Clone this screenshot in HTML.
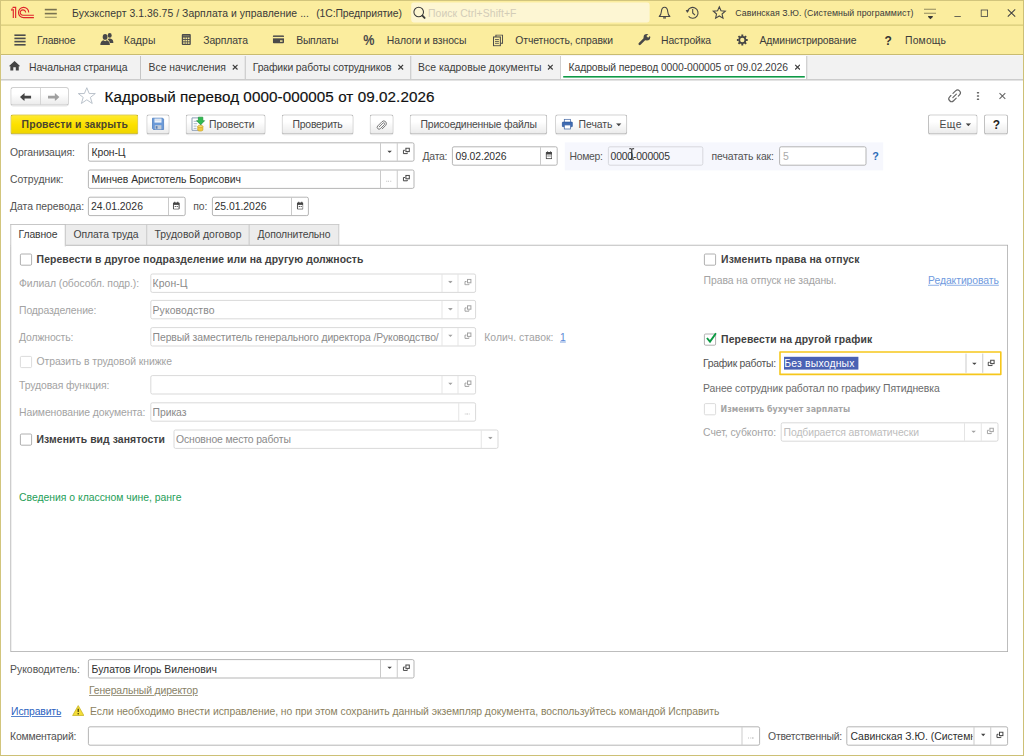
<!DOCTYPE html>
<html lang="ru"><head><meta charset="utf-8"><title>Кадровый перевод 0000-000005 от 09.02.2026</title>
<style>
html,body{margin:0;padding:0;background:#fff;overflow:hidden;width:1024px;height:756px}
#root{position:absolute;left:0;top:0;width:1280px;height:945px;transform:scale(.8);transform-origin:0 0;font-family:"Liberation Sans",Arial,sans-serif;font-size:13px;color:#3c3c3c;overflow:hidden;background:#fff}
#root div,#root svg,#root span.a{position:absolute;box-sizing:border-box}
.t{white-space:nowrap;line-height:20px;height:20px}
.b{font-weight:bold}
.g{color:#9a9a9a}
.y{background:#fbed9e}
.in{background:#fff;border:1px solid #a2a2a2;border-radius:2.5px}
.ind{background:#fff;border:1px solid #cfcfcf;border-radius:2.5px}
.sep{background:#c4c4c4;width:1px}
.sepd{background:#dcdcdc;width:1px}
.btn{border:1px solid #b2b2b2;border-bottom-color:#9f9f9f;border-radius:3px;background:linear-gradient(#fff,#fff 35%,#ebebeb);box-shadow:0 1px 0 rgba(0,0,0,.1)}
.ybtn{border:1px solid #c4ad14;border-bottom-color:#ad9705;border-radius:3px;background:linear-gradient(#ffea30,#fde100 50%,#efd500);box-shadow:0 1px 0 rgba(0,0,0,.13)}
.cb{background:#fff;border:1px solid #9c9c9c;border-radius:2px}
.cbd{background:#fff;border:1px solid #d2d2d2;border-radius:2px}
.lnk{color:#3b6fc4;text-decoration:underline}
#px{position:absolute;left:0;top:0;width:1024px;height:756px;pointer-events:none}
#px i{position:absolute;display:block}

</style></head><body>
<div id="root">
<div class="y" style="left:0px;top:0px;width:1280px;height:69px;"></div>
<div class="" style="left:0px;top:69px;width:1280px;height:31px;background:#f2f2f2"></div>
<svg style="left:10px;top:5px;" width="40" height="22.5" viewBox="8 4 32 18">
<g fill="none" stroke="#e0262c" stroke-width="1.15">
<path d="M28.7 12.6A5.1 5.1 0 1 0 23.6 17.6H33.9"/>
<path d="M25.6 12.6A2.7 2.7 0 1 0 22.9 15.25H33.9"/>
<path d="M11.1 10.1L13.3 9.7V17.9M12.7 7.4H15.65V17.9"/>
<path d="M12.9 7.5L11.3 9.6" stroke-width=".8"/>
</g>
</svg>
<div class="" style="left:56.25px;top:10.75px;width:14.38px;height:1.75px;background:#787250"></div>
<div class="" style="left:56.25px;top:15.75px;width:14.38px;height:1.75px;background:#787250"></div>
<div class="" style="left:56.25px;top:20.5px;width:14.38px;height:1.75px;background:#787250"></div>
<div class="t " style="left:90.06px;top:7.12px;color:#3a3a3a;letter-spacing:0.066px">Бухэксперт 3.1.36.75 / Зарплата и управление ...</div>
<div class="t " style="left:395.31px;top:7.12px;color:#3a3a3a;letter-spacing:-0.126px">(1С:Предприятие)</div>
<div class="" style="left:513.75px;top:2.88px;width:298.12px;height:25.62px;background:#fdf6d3;border-radius:3px"></div>
<svg style="left:513.75px;top:6.25px;" width="20" height="20" viewBox="411 5 16 16"><circle cx="418.5" cy="12.2" r="4.8" fill="none" stroke="#3a3a3a" stroke-width="1.05"/><path d="M422.2 15.9L424.4 18.1" stroke="#3a3a3a" stroke-width="1.9" stroke-linecap="round"/></svg>
<div class="t " style="left:535.06px;top:7.12px;color:#d3ccb8;letter-spacing:0.088px">Поиск Ctrl+Shift+F</div>
<svg style="left:821.25px;top:6.25px;" width="20" height="20" viewBox="657 5 16 16"><path d="M664.750 7.400c-2.300 0-3 2.200-3.200 4.500-.2 2.600-1 3.700-2.100 4.800h10.600c-1.100-1.100-1.900-2.200-2.100-4.800-.2-2.300-.9-4.500-3.200-4.500z" fill="none" stroke="#484848" stroke-width="1.100" stroke-linejoin="round"/><path d="M663.300 18.100h2.900" stroke="#484848" stroke-width="1.200" fill="none"/></svg>
<svg style="left:855px;top:6.25px;" width="20" height="20" viewBox="684 5 16 16"><path d="M687.400 11.700a5.400 5.400 0 1 1 1.200 4.900" fill="none" stroke="#484848" stroke-width="1.100"/><path d="M685.700 10.200l3.600.2-2.100 2.800z" fill="#484848"/><path d="M692.700 9.300v3.800l2.300 2.300" fill="none" stroke="#484848" stroke-width="1.100"/></svg>
<svg style="left:888.75px;top:6.25px;" width="20" height="20" viewBox="711 5 16 16"><path d="M719.10 7.00L720.80 10.95L725.09 11.35L721.86 14.20L722.80 18.40L719.10 16.20L715.40 18.40L716.34 14.20L713.11 11.35L717.40 10.95z" fill="none" stroke="#484848" stroke-width="1.100" stroke-linejoin="miter"/></svg>
<div class="t " style="left:919.06px;top:6.12px;font-size:11px;color:#3a3a3a;letter-spacing:0.080px">Савинская З.Ю. (Системный программист)</div>
<div class="" style="left:1155px;top:10.88px;width:15px;height:1.62px;background:#787250"></div>
<div class="" style="left:1155px;top:15.88px;width:15px;height:1.62px;background:#787250"></div>
<svg style="left:1157.5px;top:18.75px;" width="10" height="6.25" viewBox="926 15 8 5"><path d="M927.7 15.8h4.7v1l-2.35 2.2-2.35-2.2z" fill="#3a3a3a"/></svg>
<div class="" style="left:1192.62px;top:19.75px;width:8.62px;height:1.5px;background:#444"></div>
<div class="" style="left:1226.12px;top:11.5px;width:8.75px;height:9.38px;border:1.4px solid #444"></div>
<svg style="left:1257.5px;top:10px;" width="12.5" height="12.5" viewBox="1006 8 10 10"><path d="M1007.4 9.4l7.4 7.2M1014.8 9.4l-7.4 7.2" stroke="#444" stroke-width="1.1"/></svg>
<div class="" style="left:17.88px;top:43px;width:13.88px;height:2.12px;background:#4d4d4d"></div>
<div class="" style="left:17.88px;top:46.88px;width:13.88px;height:2.12px;background:#4d4d4d"></div>
<div class="" style="left:17.88px;top:50.75px;width:13.88px;height:2.12px;background:#4d4d4d"></div>
<div class="" style="left:17.88px;top:54.62px;width:13.88px;height:2.12px;background:#4d4d4d"></div>
<div class="t " style="left:46.31px;top:41.00px;color:#3c3c3c;letter-spacing:-0.279px">Главное</div>
<div class="t " style="left:154.69px;top:41.00px;color:#3c3c3c;letter-spacing:0.164px">Кадры</div>
<div class="t " style="left:254.06px;top:41.00px;color:#3c3c3c;letter-spacing:-0.150px">Зарплата</div>
<div class="t " style="left:370.31px;top:41.00px;color:#3c3c3c;letter-spacing:-0.357px">Выплаты</div>
<div class="t " style="left:483.44px;top:41.00px;color:#3c3c3c;letter-spacing:-0.102px">Налоги и взносы</div>
<div class="t " style="left:644.06px;top:41.00px;color:#3c3c3c;letter-spacing:-0.108px">Отчетность, справки</div>
<div class="t " style="left:826.31px;top:41.00px;color:#3c3c3c;letter-spacing:-0.172px">Настройка</div>
<div class="t " style="left:949.44px;top:41.00px;color:#3c3c3c;letter-spacing:-0.178px">Администрирование</div>
<div class="t " style="left:1131.31px;top:41.00px;color:#3c3c3c;letter-spacing:0.181px">Помощь</div>
<svg style="left:123.75px;top:40px;" width="20" height="17.5" viewBox="99 32 16 14"><g fill="#484848"><ellipse cx="109.500" cy="35.400" rx="2" ry="2.400"/><path d="M108.600 38.600c2.600-.3 4.500 1 4.500 3.400v.9h-3.500c-.2-1.500-.9-2.700-2.200-3.400z"/><ellipse cx="104.900" cy="36.900" rx="2.400" ry="2.900"/><path d="M100.100 45.100c0-2.900 1.400-4.300 3.200-4.800l1.600.9 1.600-.9c1.800.5 3.200 1.900 3.200 4.800z"/></g></svg>
<svg style="left:226.25px;top:41.25px;" width="15" height="16.25" viewBox="181 33 12 13"><rect x="182" y="34.300" width="9" height="10.800" rx=".9" fill="#4c4c4c"/><g fill="#f3e596"><rect x="183.300" y="37.700" width="1.700" height="1.500"/><rect x="185.650" y="37.700" width="1.700" height="1.500"/><rect x="188" y="37.700" width="1.700" height="1.500"/><rect x="183.300" y="40.100" width="1.700" height="1.500"/><rect x="185.650" y="40.100" width="1.700" height="1.500"/><rect x="188" y="40.100" width="1.700" height="1.500"/><rect x="183.300" y="42.500" width="1.700" height="1.500"/><rect x="185.650" y="42.500" width="1.700" height="1.500"/><rect x="188" y="42.500" width="1.700" height="1.500"/></g><rect x="183.300" y="35.500" width="6.400" height="1" fill="#8f8866"/></svg>
<svg style="left:341.25px;top:44.38px;" width="14" height="10.25" viewBox="0 0 14 10"><rect x="0" y="0" width="14" height="10" rx="1.200" fill="#4a4a4a"/><rect x="0" y="2" width="14" height="1.800" fill="#fbed9e"/><rect x="9" y="6.300" width="3.200" height="1.800" fill="#fbed9e"/></svg>
<div class="t b" style="left:454px;top:39.56px;font-size:17.500px;color:#4a4a4a;transform:scaleX(.9);transform-origin:0 50%">%</div>
<svg style="left:616.25px;top:43.12px;" width="13.12" height="15" viewBox="0 0 12 14"><path d="M3.500 3V.7h7.800v9.600H9" fill="none" stroke="#4a4a4a" stroke-width="1.200"/><rect x=".7" y="3" width="8" height="10.300" fill="none" stroke="#4a4a4a" stroke-width="1.200"/><path d="M2.500 6h4.500M2.500 8.200h4.500M2.500 10.400h4.500" stroke="#4a4a4a" stroke-width="1"/></svg>
<svg style="left:795px;top:41.25px;" width="20" height="17.5" viewBox="636 33 16 14"><path d="M639.700 44.100L646 37.800" stroke="#484848" stroke-width="2.500" stroke-linecap="round"/><circle cx="646.900" cy="37.500" r="3.300" fill="#484848"/><rect x="645.700" y="33" width="2.400" height="4" fill="#fbed9e" transform="rotate(45 646.900 37.500)"/></svg>
<svg style="left:918.75px;top:41.25px;" width="18.12" height="18.12" viewBox="735 33 14.5 14.5"><circle cx="742.1" cy="40.2" r="3.050" fill="none" stroke="#464646" stroke-width="1.700"/><path d="M745.70 40.20L747.50 40.20M744.65 42.75L745.92 44.02M742.10 43.80L742.10 45.60M739.55 42.75L738.28 44.02M738.50 40.20L736.70 40.20M739.55 37.65L738.28 36.38M742.10 36.60L742.10 34.80M744.65 37.65L745.92 36.38" stroke="#464646" stroke-width="1.900" fill="none"/></svg>
<div class="t b" style="left:1105.62px;top:41.00px;font-size:15px;color:#333">?</div>
<svg style="left:11.12px;top:76.25px;" width="14.38" height="12.5" viewBox="0 0 12 10"><path d="M6 0L0 5.400h1.600V10h3.100V6.500h2.600V10h3.100V5.400H12z" fill="#444"/></svg>
<div class="t " style="left:36.31px;top:74.50px;;letter-spacing:-0.165px">Начальная страница</div>
<div class="" style="left:175px;top:69px;width:1.12px;height:30px;background:#b9b9b9"></div>
<div class="t " style="left:185.69px;top:74.50px;;letter-spacing:-0.017px">Все начисления</div>
<svg style="left:290.12px;top:80.25px;" width="7.88" height="7.88" viewBox="0 0 8 8"><path d="M1 1l6 6M7 1l-6 6" stroke="#3c3c3c" stroke-width="1.45"/></svg>
<div class="" style="left:306.25px;top:69px;width:1.12px;height:30px;background:#b9b9b9"></div>
<div class="t " style="left:315.94px;top:74.50px;;letter-spacing:-0.175px">Графики работы сотрудников</div>
<svg style="left:497px;top:80.25px;" width="7.88" height="7.88" viewBox="0 0 8 8"><path d="M1 1l6 6M7 1l-6 6" stroke="#3c3c3c" stroke-width="1.45"/></svg>
<div class="" style="left:512.5px;top:69px;width:1.12px;height:30px;background:#b9b9b9"></div>
<div class="t " style="left:522.56px;top:74.50px;;letter-spacing:0.011px">Все кадровые документы</div>
<svg style="left:683.88px;top:80.25px;" width="7.88" height="7.88" viewBox="0 0 8 8"><path d="M1 1l6 6M7 1l-6 6" stroke="#3c3c3c" stroke-width="1.45"/></svg>
<div class="" style="left:700px;top:69px;width:1.12px;height:30px;background:#b9b9b9"></div>
<div class="" style="left:701.12px;top:69px;width:307px;height:30px;background:#fff"></div>
<div class="" style="left:703.62px;top:95.12px;width:302px;height:2.25px;background:#0f9a47"></div>
<div class="" style="left:1008.12px;top:69px;width:1.12px;height:30px;background:#b9b9b9"></div>
<div class="t " style="left:710.69px;top:74.50px;;letter-spacing:-0.126px">Кадровый перевод 0000-000005 от 09.02.2026</div>
<svg style="left:992.62px;top:80.25px;" width="7.88" height="7.88" viewBox="0 0 8 8"><path d="M1 1l6 6M7 1l-6 6" stroke="#3c3c3c" stroke-width="1.45"/></svg>
<div class="btn" style="left:12.75px;top:108.62px;width:72.75px;height:23px;"></div>
<div class="" style="left:49.88px;top:109.5px;width:1px;height:21.25px;background:#cfcfcf"></div>
<svg style="left:25px;top:115.5px;" width="14.25" height="10.75" viewBox="0 0 15 11"><path d="M6 0L0 5.500 6 11V7.300h9V3.700H6z" fill="#454545"/></svg>
<svg style="left:60.25px;top:115.5px;" width="14.25" height="10.75" viewBox="0 0 15 11"><path d="M9 0l6 5.500L9 11V7.300H0V3.700h9z" fill="#a0a0a0"/></svg>
<svg style="left:96.25px;top:108.25px;" width="25" height="23.12" viewBox="0 0 24 22"><path d="M12 1.500l2.900 7h7.300l-5.900 4.600 2.200 7.300L12 16l-6.500 4.400 2.200-7.300L1.800 8.500h7.300z" fill="#fff" stroke="#b3bcc6" stroke-width="1.100" stroke-linejoin="round"/></svg>
<div class="t " style="left:130.69px;top:111.00px;font-size:19px;color:#111;line-height:24px;height:24px;margin-top:-2px;-webkit-text-stroke:.22px #111;;letter-spacing:0.097px">Кадровый перевод 0000-000005 от 09.02.2026</div>
<svg style="left:1182.5px;top:110px;" width="20" height="20" viewBox="946 88 16 16"><g transform="translate(954.2 95.8) rotate(-45)" fill="none" stroke="#666" stroke-width="1.15" stroke-linecap="round"><path d="M0.500-2.800H4.200A2.800 2.800 0 0 1 4.200 2.800H2.400"/><path d="M-0.500 2.800H-4.200A2.800 2.800 0 0 1-4.200-2.800H-2.400"/><path d="M-2.500 0H2.500"/></g></svg>
<div class="" style="left:1221.12px;top:114.62px;width:3px;height:2.88px;background:#666;border-radius:.6px"></div>
<div class="" style="left:1221.12px;top:118.62px;width:3px;height:2.88px;background:#666;border-radius:.6px"></div>
<div class="" style="left:1221.12px;top:122.5px;width:3px;height:2.88px;background:#666;border-radius:.6px"></div>
<svg style="left:1247.5px;top:115px;" width="10" height="10" viewBox="998 92 8 8"><path d="M999.100 93.100l5.800 5.800M1004.900 93.100l-5.800 5.800" stroke="#666" stroke-width="1.050"/></svg>
<div class="ybtn" style="left:12.75px;top:142.75px;width:160px;height:25.5px;"></div>
<div class="t b" style="left:26.94px;top:146.38px;color:#4b452e;letter-spacing:0.156px">Провести и закрыть</div>
<div class="btn" style="left:182.5px;top:142.75px;width:29.38px;height:25.5px;"></div>
<svg style="left:188.75px;top:146.25px;" width="17.5" height="17.5" viewBox="151 117 14 14"><path d="M152.3 118.4h10.2l.9.9v10.400h-10.200l-.9-.9z" fill="#6b9ad8" stroke="#4f7fc0" stroke-width=".8"/><rect x="154.300" y="118.800" width="7" height="4" fill="#eef3fa"/><path d="M155 120.200h5.600" stroke="#b9c8dd" stroke-width=".7"/><rect x="154.600" y="125.400" width="6.600" height="4.100" fill="#c3ccd8"/><rect x="155.500" y="126.300" width="1.800" height="2.600" fill="#5a7fb5"/></svg>
<div class="btn" style="left:231.5px;top:142.75px;width:100px;height:25.5px;"></div>
<svg style="left:237.5px;top:145px;" width="20" height="20" viewBox="190 116 16 16"><path d="M191.600 117.900h6.500l2.400 2.400v10h-8.900z" fill="#fff" stroke="#7f93ad" stroke-width=".9"/><path d="M193.200 121.300h3.600M193.200 123.700h3.600M193.200 126.100h3M193.200 128.400h3" stroke="#93a5bd" stroke-width=".8"/><path d="M198 117.200h4.400v3.500h1.800l-4 4.100-4-4.100h1.800z" fill="#2fbb50" stroke="#1c8f3a" stroke-width=".7" stroke-linejoin="round"/><path d="M197.300 126.300v3.700c0 .6 1.200 1.100 2.600 1.100s2.600-.5 2.600-1.100v-3.700" fill="#f0c93f" stroke="#c59a17" stroke-width=".6"/><ellipse cx="199.900" cy="126.300" rx="2.600" ry="1.100" fill="#f8de78" stroke="#c59a17" stroke-width=".6"/></svg>
<div class="t " style="left:261.31px;top:146.38px;color:#484848;letter-spacing:-0.109px">Провести</div>
<div class="btn" style="left:351.5px;top:142.75px;width:90px;height:25.5px;"></div>
<div class="t " style="left:365.69px;top:146.38px;color:#484848;letter-spacing:-0.299px">Проверить</div>
<div class="btn" style="left:461.75px;top:142.75px;width:30px;height:25.5px;"></div>
<svg style="left:470px;top:148.75px;" width="13.75" height="14.38" viewBox="0 0 14 14"><path d="M4.200 9.300l4.700-4.700a1.300 1.300 0 0 1 1.900 1.900L5.600 11.700a2.400 2.400 0 0 1-3.400-3.400L7.600 2.900a3.300 3.300 0 0 1 4.700 4.700L8 11.900" fill="none" stroke="#6e6e6e" stroke-width="1.150" stroke-linecap="round"/></svg>
<div class="btn" style="left:511.5px;top:142.75px;width:172.5px;height:25.5px;"></div>
<div class="t " style="left:525.69px;top:146.38px;color:#484848;letter-spacing:-0.267px">Присоединенные файлы</div>
<div class="btn" style="left:694px;top:142.75px;width:90px;height:25.5px;"></div>
<svg style="left:701.75px;top:148px;" width="14.5" height="14.5" viewBox="0 0 15 14"><rect x="3.500" y=".7" width="8" height="4" fill="#fff" stroke="#4b6ea8" stroke-width="1"/><rect x=".7" y="4.200" width="13.600" height="6" rx="1.200" fill="#3d6bb3" stroke="#2d5596" stroke-width=".8"/><rect x="3.500" y="8" width="8" height="5.200" fill="#fff" stroke="#4b6ea8" stroke-width="1"/></svg>
<div class="t " style="left:723.19px;top:146.38px;color:#484848;letter-spacing:-0.044px">Печать</div>
<svg style="left:770px;top:154.25px;" width="6.88" height="4" viewBox="0 0 7 4"><path d="M0 0h7L3.500 4z" fill="#444"/></svg>
<div class="btn" style="left:1160.25px;top:142.75px;width:61.25px;height:25.5px;"></div>
<div class="t " style="left:1174.44px;top:146.38px;color:#484848;letter-spacing:0.461px">Еще</div>
<svg style="left:1206.88px;top:154.25px;" width="6.88" height="4" viewBox="0 0 7 4"><path d="M0 0h7L3.500 4z" fill="#444"/></svg>
<div class="btn" style="left:1230.25px;top:142.75px;width:30px;height:25.5px;"></div>
<div class="t b" style="left:1241px;top:146.38px;font-size:15px;color:#222">?</div>
<div class="t " style="left:12.56px;top:181.38px;color:#525252;letter-spacing:-0.082px">Организация:</div>
<div class="in" style="left:110.25px;top:178.25px;width:407.5px;height:24.12px;"></div>
<div class="" style="left:474.88px;top:179.25px;width:1.06px;height:22.12px;background:#bdbdbd"></div>
<svg style="left:483.5px;top:187.56px;" width="6" height="3.38" viewBox="0 0 8 4.5"><path d="M0 0h8L4 4.5z" fill="#444"/></svg>
<div class="" style="left:495.56px;top:179.25px;width:1.06px;height:22.12px;background:#bdbdbd"></div>
<svg style="left:502.69px;top:184.44px;" width="10" height="9.25" viewBox="402.15 147.55 8 7.4"><g fill="none" stroke="#444" stroke-width="1"><rect x="405.65" y="148.55" width="3.4" height="3.4"/><path d="M404.65 150.65H403.15V153.95H407.05V152.95"/></g></svg>
<div class="t " style="left:114.44px;top:181.31px;width:358.62px;overflow:hidden;color:#303030;;letter-spacing:-0.159px">Крон-Ц</div>
<div class="t " style="left:528.19px;top:186.00px;color:#525252;letter-spacing:-0.320px">Дата:</div>
<div class="in" style="left:565.38px;top:182.88px;width:131.25px;height:24.12px;"></div>
<div class="" style="left:675.38px;top:183.88px;width:1.06px;height:22.12px;background:#bdbdbd"></div>
<svg style="left:681.56px;top:189.19px;" width="8.62" height="10.12" viewBox="0 0 10 11.8"><rect x=".8" y="2" width="8.400" height="9" rx=".8" fill="none" stroke="#444" stroke-width="1.500"/><rect x=".8" y="2" width="8.400" height="2.800" fill="#444"/><path d="M2.800 0v2.500M7.200 0v2.500" stroke="#444" stroke-width="1.500"/><path d="M2.800 6.300h1.600v1.600H2.800zM5.600 6.300h1.600v1.600H5.600z" fill="#444"/></svg>
<div class="t " style="left:569.44px;top:185.94px;width:103.19px;overflow:hidden;color:#303030;;letter-spacing:-0.161px">09.02.2026</div>
<div class="" style="left:706.25px;top:177.5px;width:398.12px;height:35px;background:#f6f7fd"></div>
<div class="t " style="left:711.94px;top:186.00px;color:#525252;letter-spacing:-0.378px">Номер:</div>
<div class="ind" style="left:760px;top:182.88px;width:119.38px;height:24.12px;background:#f6f7fd;border-color:#cfd0d6"></div>
<div class="t " style="left:763.19px;top:186.25px;color:#333;letter-spacing:-0.239px">0000-000005</div>
<div class="t " style="left:889.44px;top:186.00px;color:#525252;letter-spacing:-0.096px">печатать как:</div>
<div class="in" style="left:974.12px;top:182.88px;width:109.12px;height:24.12px;"></div>
<div class="t " style="left:978.75px;top:186.25px;color:#aaa">5</div>
<div class="t b" style="left:1090.25px;top:186.00px;color:#2b6cb8;font-size:13.500px">?</div>
<svg style="left:785.62px;top:185px;" width="7.5" height="15" viewBox="0 0 6 12"><path d="M.5.700h2M3.500.700h2M3 .700v10.600M.5 11.300h2M3.500 11.300h2" stroke="#222" stroke-width="1.100" fill="none"/></svg>
<div class="t " style="left:12.56px;top:215.12px;color:#525252;letter-spacing:-0.002px">Сотрудник:</div>
<div class="in" style="left:110.25px;top:212.12px;width:407.5px;height:24.12px;"></div>
<div class="" style="left:474.88px;top:213.12px;width:1.06px;height:22.12px;background:#bdbdbd"></div>
<div class="" style="left:482.5px;top:226.19px;width:1.25px;height:1.25px;background:#9a9a9a"></div>
<div class="" style="left:485.12px;top:226.19px;width:1.25px;height:1.25px;background:#9a9a9a"></div>
<div class="" style="left:487.75px;top:226.19px;width:1.25px;height:1.25px;background:#9a9a9a"></div>
<div class="" style="left:495.56px;top:213.12px;width:1.06px;height:22.12px;background:#bdbdbd"></div>
<svg style="left:502.69px;top:218.31px;" width="10" height="9.25" viewBox="402.15 174.65 8 7.4"><g fill="none" stroke="#444" stroke-width="1"><rect x="405.65" y="175.65" width="3.4" height="3.4"/><path d="M404.65 177.75H403.15V181.05H407.05V180.05"/></g></svg>
<div class="t " style="left:114.44px;top:215.19px;width:358.62px;overflow:hidden;color:#303030;;letter-spacing:-0.043px">Минчев Аристотель Борисович</div>
<div class="t " style="left:12.56px;top:248.88px;color:#525252;letter-spacing:-0.049px">Дата перевода:</div>
<div class="in" style="left:110.25px;top:245.88px;width:121.25px;height:24.12px;"></div>
<div class="" style="left:210.25px;top:246.88px;width:1.06px;height:22.12px;background:#bdbdbd"></div>
<svg style="left:216.44px;top:252.19px;" width="8.62" height="10.12" viewBox="0 0 10 11.8"><rect x=".8" y="2" width="8.400" height="9" rx=".8" fill="none" stroke="#444" stroke-width="1.500"/><rect x=".8" y="2" width="8.400" height="2.800" fill="#444"/><path d="M2.800 0v2.500M7.200 0v2.500" stroke="#444" stroke-width="1.500"/><path d="M2.800 6.300h1.600v1.600H2.800zM5.600 6.300h1.600v1.600H5.600z" fill="#444"/></svg>
<div class="t " style="left:113.81px;top:248.94px;width:93.69px;overflow:hidden;color:#303030;;letter-spacing:-0.023px">24.01.2026</div>
<div class="t " style="left:241.56px;top:248.88px;color:#525252;letter-spacing:-0.070px">по:</div>
<div class="in" style="left:265px;top:245.88px;width:120.62px;height:24.12px;"></div>
<div class="" style="left:364.38px;top:246.88px;width:1.06px;height:22.12px;background:#bdbdbd"></div>
<svg style="left:370.56px;top:252.19px;" width="8.62" height="10.12" viewBox="0 0 10 11.8"><rect x=".8" y="2" width="8.400" height="9" rx=".8" fill="none" stroke="#444" stroke-width="1.500"/><rect x=".8" y="2" width="8.400" height="2.800" fill="#444"/><path d="M2.800 0v2.500M7.200 0v2.500" stroke="#444" stroke-width="1.500"/><path d="M2.800 6.300h1.600v1.600H2.800zM5.600 6.300h1.600v1.600H5.600z" fill="#444"/></svg>
<div class="t " style="left:268.19px;top:248.94px;width:93.44px;overflow:hidden;color:#303030;;letter-spacing:-0.023px">25.01.2026</div>
<div class="" style="left:12.75px;top:306.25px;width:1247.25px;height:508.88px;border:1px solid #adadad;background:#fff"></div>
<div class="" style="left:81.25px;top:280.25px;width:102.25px;height:26.62px;background:#ececec;border:1px solid #c6c6c6;border-bottom-color:#b9b9b9"></div>
<div class="t " style="left:91.94px;top:284.00px;color:#444;letter-spacing:-0.104px">Оплата труда</div>
<div class="" style="left:182.5px;top:280.25px;width:129.75px;height:26.62px;background:#ececec;border:1px solid #c6c6c6;border-bottom-color:#b9b9b9"></div>
<div class="t " style="left:193.19px;top:284.00px;color:#444;letter-spacing:0.057px">Трудовой договор</div>
<div class="" style="left:311.25px;top:280.25px;width:112.88px;height:26.62px;background:#ececec;border:1px solid #c6c6c6;border-bottom-color:#b9b9b9"></div>
<div class="t " style="left:321.94px;top:284.00px;color:#444;letter-spacing:-0.204px">Дополнительно</div>
<div class="" style="left:12.75px;top:280.25px;width:69.5px;height:27.5px;background:#fff;border:1px solid #b9b9b9;border-bottom:none"></div>
<div class="t " style="left:23.19px;top:284.00px;color:#3a3a3a;letter-spacing:-0.174px">Главное</div>
<div class="cb" style="left:25.25px;top:316.5px;width:15px;height:15px;"></div>
<div class="t b" style="left:45.69px;top:314.75px;color:#414141;letter-spacing:0.128px">Перевести в другое подразделение или на другую должность</div>
<div class="t " style="left:23.81px;top:344.50px;color:#a3a3a3;letter-spacing:-0.106px">Филиал (обособл. подр.):</div>
<div class="ind" style="left:187.75px;top:341.5px;width:406.88px;height:24.12px;"></div>
<div class="" style="left:551.75px;top:342.5px;width:1.06px;height:22.12px;background:#dedede"></div>
<svg style="left:560.38px;top:350.81px;" width="6" height="3.38" viewBox="0 0 8 4.5"><path d="M0 0h8L4 4.5z" fill="#a2a2a2"/></svg>
<div class="" style="left:572.44px;top:342.5px;width:1.06px;height:22.12px;background:#dedede"></div>
<svg style="left:579.56px;top:347.69px;" width="10" height="9.25" viewBox="463.65 278.15 8 7.4"><g fill="none" stroke="#a2a2a2" stroke-width="1"><rect x="467.15" y="279.15" width="3.4" height="3.4"/><path d="M466.15 281.25H464.65V284.55H468.55V283.55"/></g></svg>
<div class="t " style="left:190.69px;top:344.56px;width:359.25px;overflow:hidden;color:#8a8a8a;;letter-spacing:0.091px">Крон-Ц</div>
<div class="t " style="left:23.81px;top:378.25px;color:#a3a3a3;letter-spacing:-0.124px">Подразделение:</div>
<div class="ind" style="left:187.75px;top:375.25px;width:406.88px;height:24.12px;"></div>
<div class="" style="left:551.75px;top:376.25px;width:1.06px;height:22.12px;background:#dedede"></div>
<svg style="left:560.38px;top:384.56px;" width="6" height="3.38" viewBox="0 0 8 4.5"><path d="M0 0h8L4 4.5z" fill="#a2a2a2"/></svg>
<div class="" style="left:572.44px;top:376.25px;width:1.06px;height:22.12px;background:#dedede"></div>
<svg style="left:579.56px;top:381.44px;" width="10" height="9.25" viewBox="463.65 305.15 8 7.4"><g fill="none" stroke="#a2a2a2" stroke-width="1"><rect x="467.15" y="306.15" width="3.4" height="3.4"/><path d="M466.15 308.25H464.65V311.55H468.55V310.55"/></g></svg>
<div class="t " style="left:190.69px;top:378.31px;width:359.25px;overflow:hidden;color:#8a8a8a;;letter-spacing:0.141px">Руководство</div>
<div class="t " style="left:23.81px;top:412.00px;color:#a3a3a3;letter-spacing:-0.160px">Должность:</div>
<div class="ind" style="left:187.75px;top:409px;width:406.88px;height:24.12px;"></div>
<div class="" style="left:551.75px;top:410px;width:1.06px;height:22.12px;background:#dedede"></div>
<svg style="left:560.38px;top:418.31px;" width="6" height="3.38" viewBox="0 0 8 4.5"><path d="M0 0h8L4 4.5z" fill="#a2a2a2"/></svg>
<div class="" style="left:572.44px;top:410px;width:1.06px;height:22.12px;background:#dedede"></div>
<svg style="left:579.56px;top:415.19px;" width="10" height="9.25" viewBox="463.65 332.15 8 7.4"><g fill="none" stroke="#a2a2a2" stroke-width="1"><rect x="467.15" y="333.15" width="3.4" height="3.4"/><path d="M466.15 335.25H464.65V338.55H468.55V337.55"/></g></svg>
<div class="t " style="left:190.75px;top:412.06px;width:359.75px;overflow:hidden;color:#8a8a8a;letter-spacing:-0.13px;">Первый заместитель генерального директора /Руководство/</div>
<div class="t " style="left:605.31px;top:412.00px;color:#a3a3a3;letter-spacing:0.023px">Колич. ставок:</div>
<div class="t lnk" style="left:700px;top:412.00px;color:#5d8ad6">1</div>
<div class="cbd" style="left:25.25px;top:444.5px;width:15px;height:15px;"></div>
<div class="t " style="left:45.69px;top:442.38px;color:#a3a3a3;letter-spacing:-0.076px">Отразить в трудовой книжке</div>
<div class="t " style="left:23.81px;top:472.00px;color:#a3a3a3;letter-spacing:-0.132px">Трудовая функция:</div>
<div class="ind" style="left:187.75px;top:469.12px;width:406.88px;height:24.12px;"></div>
<div class="" style="left:551.75px;top:470.12px;width:1.06px;height:22.12px;background:#dedede"></div>
<svg style="left:560.38px;top:478.44px;" width="6" height="3.38" viewBox="0 0 8 4.5"><path d="M0 0h8L4 4.5z" fill="#a2a2a2"/></svg>
<div class="" style="left:572.44px;top:470.12px;width:1.06px;height:22.12px;background:#dedede"></div>
<svg style="left:579.56px;top:475.31px;" width="10" height="9.25" viewBox="463.65 380.25 8 7.4"><g fill="none" stroke="#a2a2a2" stroke-width="1"><rect x="467.15" y="381.25" width="3.4" height="3.4"/><path d="M466.15 383.35H464.65V386.65H468.55V385.65"/></g></svg>
<div class="t " style="left:23.81px;top:505.75px;color:#a3a3a3;letter-spacing:-0.124px">Наименование документа:</div>
<div class="ind" style="left:187.75px;top:502.88px;width:407.5px;height:24.12px;"></div>
<div class="" style="left:573.06px;top:503.88px;width:1.06px;height:22.12px;background:#dedede"></div>
<div class="" style="left:580.69px;top:516.94px;width:1.25px;height:1.25px;background:#b5b5b5"></div>
<div class="" style="left:583.31px;top:516.94px;width:1.25px;height:1.25px;background:#b5b5b5"></div>
<div class="" style="left:585.94px;top:516.94px;width:1.25px;height:1.25px;background:#b5b5b5"></div>
<div class="t " style="left:190.69px;top:505.94px;width:380.56px;overflow:hidden;color:#8a8a8a;;letter-spacing:-0.097px">Приказ</div>
<div class="cb" style="left:25.25px;top:541.5px;width:15px;height:15px;"></div>
<div class="t b" style="left:45.69px;top:539.75px;color:#414141;letter-spacing:0.094px">Изменить вид занятости</div>
<div class="ind" style="left:216.5px;top:536.75px;width:406.88px;height:24.12px;"></div>
<div class="" style="left:601.19px;top:537.75px;width:1.06px;height:22.12px;background:#dedede"></div>
<svg style="left:609.81px;top:546.06px;" width="6" height="3.38" viewBox="0 0 8 4.5"><path d="M0 0h8L4 4.5z" fill="#a2a2a2"/></svg>
<div class="t " style="left:220.06px;top:539.81px;width:379.31px;overflow:hidden;color:#8a8a8a;;letter-spacing:-0.152px">Основное место работы</div>
<div class="t " style="left:23.81px;top:612.00px;color:#1e9e58;letter-spacing:-0.015px">Сведения о классном чине, ранге</div>
<div class="cb" style="left:880.25px;top:316.5px;width:15px;height:15px;"></div>
<div class="t b" style="left:901.31px;top:314.75px;color:#414141;letter-spacing:0.174px">Изменить права на отпуск</div>
<div class="t " style="left:879.44px;top:340.75px;color:#a3a3a3;letter-spacing:-0.063px">Права на отпуск не заданы.</div>
<div class="t lnk" style="left:1160.06px;top:341.38px;color:#6f9ade;letter-spacing:-0.099px">Редактировать</div>
<div class="cb" style="left:880.25px;top:416.5px;width:15px;height:15px;"></div>
<svg style="left:881.75px;top:414.5px;" width="14.38" height="15" viewBox="0 0 14 15"><path d="M1.500 7.500l3.800 4.500L12.800 1.500" fill="none" stroke="#0b9a43" stroke-width="2.400"/></svg>
<div class="t b" style="left:901.31px;top:414.75px;color:#414141;letter-spacing:0.154px">Перевести на другой график</div>
<div class="t " style="left:878.81px;top:444.50px;color:#525252;letter-spacing:-0.340px">График работы:</div>
<div class="" style="left:974.12px;top:439px;width:277.75px;height:29.5px;border:2px solid #f6c71c;background:#fff;border-radius:1px"></div>
<div class="" style="left:980px;top:445.75px;width:92.5px;height:15.75px;background:#4a62b4"></div>
<div class="t " style="left:980.44px;top:444.50px;color:#fff;letter-spacing:0.219px">Без выходных</div>
<div class="" style="left:1206.75px;top:442px;width:1.12px;height:23.5px;background:#bdbdbd"></div>
<div class="" style="left:1227.5px;top:442px;width:1.12px;height:23.5px;background:#bdbdbd"></div>
<svg style="left:1214.5px;top:452.5px;" width="6" height="3.38" viewBox="0 0 8 4.5"><path d="M0 0h8L4 4.5z" fill="#444"/></svg>
<svg style="left:1234.19px;top:448.88px;" width="10" height="9.25" viewBox="987.35 359.10 8 7.4"><g fill="none" stroke="#444" stroke-width="1"><rect x="990.85" y="360.10" width="3.4" height="3.4"/><path d="M989.85 362.20H988.35V365.50H992.25V364.50"/></g></svg>
<div class="t " style="left:878.81px;top:475.75px;color:#6c6c6c;letter-spacing:-0.106px">Ранее сотрудник работал по графику Пятидневка</div>
<div class="cbd" style="left:880.25px;top:503.75px;width:15px;height:15px;"></div>
<div class="t b" style="left:900.69px;top:502.25px;color:#a6a6a6;font-family:'DejaVu Sans','Liberation Sans',sans-serif;font-size:9.9px;;letter-spacing:0.014px">Изменить бухучет зарплаты</div>
<div class="t " style="left:878.81px;top:531.38px;color:#a3a3a3;letter-spacing:-0.048px">Счет, субконто:</div>
<div class="ind" style="left:975.75px;top:528.25px;width:272.5px;height:24.12px;"></div>
<div class="" style="left:1205.38px;top:529.25px;width:1.06px;height:22.12px;background:#dedede"></div>
<svg style="left:1214px;top:537.56px;" width="6" height="3.38" viewBox="0 0 8 4.5"><path d="M0 0h8L4 4.5z" fill="#a2a2a2"/></svg>
<div class="" style="left:1226.06px;top:529.25px;width:1.06px;height:22.12px;background:#dedede"></div>
<svg style="left:1233.19px;top:534.44px;" width="10" height="9.25" viewBox="986.55 427.55 8 7.4"><g fill="none" stroke="#a2a2a2" stroke-width="1"><rect x="990.05" y="428.55" width="3.4" height="3.4"/><path d="M989.05 430.65H987.55V433.95H991.45V432.95"/></g></svg>
<div class="t " style="left:979.44px;top:531.31px;width:224.13px;overflow:hidden;color:#bdbdbd;;letter-spacing:-0.125px">Подбирается автоматически</div>
<div class="t " style="left:12.56px;top:826.75px;color:#525252;letter-spacing:-0.000px">Руководитель:</div>
<div class="in" style="left:110.25px;top:823.75px;width:407.5px;height:24.12px;"></div>
<div class="" style="left:474.88px;top:824.75px;width:1.06px;height:22.12px;background:#bdbdbd"></div>
<svg style="left:483.5px;top:833.06px;" width="6" height="3.38" viewBox="0 0 8 4.5"><path d="M0 0h8L4 4.5z" fill="#444"/></svg>
<div class="" style="left:495.56px;top:824.75px;width:1.06px;height:22.12px;background:#bdbdbd"></div>
<svg style="left:502.69px;top:829.94px;" width="10" height="9.25" viewBox="402.15 663.95 8 7.4"><g fill="none" stroke="#444" stroke-width="1"><rect x="405.65" y="664.95" width="3.4" height="3.4"/><path d="M404.65 667.05H403.15V670.35H407.05V669.35"/></g></svg>
<div class="t " style="left:114.44px;top:826.81px;width:358.62px;overflow:hidden;color:#303030;;letter-spacing:-0.025px">Булатов Игорь Виленович</div>
<div class="t " style="left:111.31px;top:853.62px;color:#878166;text-decoration:underline;;letter-spacing:-0.174px">Генеральный директор</div>
<div class="t lnk" style="left:13.81px;top:880.12px;color:#2c62c0;;letter-spacing:-0.156px">Исправить</div>
<svg style="left:89.75px;top:880.75px;" width="15.62" height="14.38" viewBox="0 0 16 14.500"><path d="M8 .9L15.200 13.600H.8z" fill="#f3dd38" stroke="#c8b426" stroke-width="1" stroke-linejoin="round"/><path d="M8 4.800v4.400" stroke="#5a5010" stroke-width="1.800"/><rect x="7.100" y="10.400" width="1.800" height="1.800" fill="#5a5010"/></svg>
<div class="t " style="left:112.56px;top:879.88px;color:#8a7f60;;letter-spacing:-0.049px">Если необходимо внести исправление, но при этом сохранить данный экземпляр документа, воспользуйтесь командой Исправить</div>
<div class="t " style="left:12.56px;top:910.75px;color:#525252;letter-spacing:-0.227px">Комментарий:</div>
<div class="in" style="left:110.25px;top:907.88px;width:839.38px;height:24.12px;"></div>
<div class="" style="left:927.44px;top:908.87px;width:1.06px;height:22.12px;background:#bdbdbd"></div>
<div class="" style="left:935.06px;top:921.94px;width:1.25px;height:1.25px;background:#9a9a9a"></div>
<div class="" style="left:937.69px;top:921.94px;width:1.25px;height:1.25px;background:#9a9a9a"></div>
<div class="" style="left:940.31px;top:921.94px;width:1.25px;height:1.25px;background:#9a9a9a"></div>
<div class="t " style="left:960.06px;top:910.75px;color:#525252;letter-spacing:-0.294px">Ответственный:</div>
<div class="in" style="left:1058px;top:907.88px;width:201.88px;height:24.12px;"></div>
<div class="" style="left:1217px;top:908.87px;width:1.06px;height:22.12px;background:#bdbdbd"></div>
<svg style="left:1225.62px;top:917.19px;" width="6" height="3.38" viewBox="0 0 8 4.5"><path d="M0 0h8L4 4.5z" fill="#444"/></svg>
<div class="" style="left:1237.69px;top:908.87px;width:1.06px;height:22.12px;background:#bdbdbd"></div>
<svg style="left:1244.81px;top:914.06px;" width="10" height="9.25" viewBox="995.85 731.25 8 7.4"><g fill="none" stroke="#444" stroke-width="1"><rect x="999.35" y="732.25" width="3.4" height="3.4"/><path d="M998.35 734.35H996.85V737.65H1000.75V736.65"/></g></svg>
<div class="t " style="left:1063.12px;top:910.94px;width:152.63px;overflow:hidden;color:#303030;">Савинская З.Ю. (Системный программист)</div>
</div>
<div id="px">
<i style="left:0px;top:24px;width:1024px;height:1px;background:#e9dc8c"></i>
<i style="left:0px;top:25px;width:1024px;height:1px;background:#e0d382"></i>
<i style="left:0px;top:54px;width:1024px;height:1px;background:#c9bc71"></i>
<i style="left:0px;top:55px;width:1024px;height:1px;background:#f5f5f7"></i>
<i style="left:0px;top:79px;width:1024px;height:1px;background:#cccccc"></i>
<i style="left:0px;top:80px;width:1024px;height:1px;background:#e3e3e3"></i>
<i style="left:0px;top:0px;width:1024px;height:1px;background:#d2c57c"></i>
<i style="left:0px;top:0px;width:1px;height:756px;background:#d2c57c"></i>
<i style="left:1023px;top:0px;width:1px;height:756px;background:#cdc076"></i>
<i style="left:0px;top:755px;width:1024px;height:1px;background:#cdc076"></i>
</div>
</body></html>
